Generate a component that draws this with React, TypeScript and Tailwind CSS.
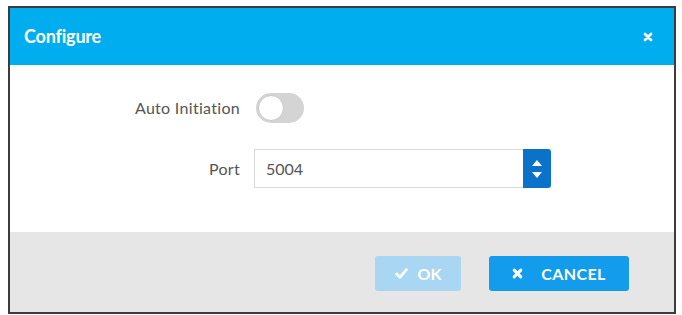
import React from 'react';

const font = { fontFamily: 'Lato, "Open Sans", sans-serif' };

function XIcon({ className }: { className?: string }) {
    return (
        <svg viewBox="0 0 10 10" className={className} fill="none" stroke="currentColor" strokeWidth={2.8} strokeLinecap="round">
            <path d="M2 2 L8 8 M8 2 L2 8" />
        </svg>
    );
}

function CheckIcon({ className }: { className?: string }) {
    return (
        <svg viewBox="0 0 12 10" className={className} fill="none" stroke="currentColor" strokeWidth={2.6} strokeLinecap="round" strokeLinejoin="round">
            <path d="M1.5 5.5 L4.5 8.5 L10.5 1.5" />
        </svg>
    );
}

export default function App() {
    return (
        <div className="w-[682px] h-[315px] bg-white pt-[6px] pl-[8px]" style={font}>
            <div className="w-[668px] h-[308px] border-2 border-[#3c3c3c] flex flex-col">
                {/* header */}
                <div className="h-[57px] bg-[#00aeef] flex items-center justify-between pl-[14px] pr-[21px]">
                    <span className="text-white text-[18px] font-bold tracking-[-0.2px]">Configure</span>
                    <XIcon className="w-[10px] h-[10px] text-white" />
                </div>

                {/* body */}
                <div className="h-[167px] bg-white pt-[28px] flex flex-col gap-[26px]">
                    <div className="flex items-center">
                        <span className="w-[230px] text-right text-[16px] tracking-[0.3px] text-[#555]">Auto Initiation</span>
                        <div className="ml-[16px] w-[48px] h-[30px] rounded-full bg-[#d4d4d4] flex items-center pl-[2px]">
                            <div className="w-[26px] h-[26px] rounded-full bg-white border border-[#c8c8c8]" />
                        </div>
                    </div>
                    <div className="flex items-center">
                        <span className="w-[230px] text-right text-[16px] tracking-[0.3px] text-[#555]">Port</span>
                        <div className="ml-[14px] flex h-[39px]">
                            <div className="w-[269px] border border-[#d9d9d9] border-r-0 flex items-center pl-[11px] text-[16px] text-[#555]">5004</div>
                            <div className="w-[28px] bg-[#0b72c9] rounded-r-[3px] flex flex-col items-center justify-center gap-[6px]">
                                <svg viewBox="0 0 10 6" className="w-[10px] h-[6px]"><path d="M5 0 L10 6 L0 6 Z" fill="white" /></svg>
                                <svg viewBox="0 0 10 6" className="w-[10px] h-[6px]"><path d="M0 0 L10 0 L5 6 Z" fill="white" /></svg>
                            </div>
                        </div>
                    </div>
                </div>

                {/* footer */}
                <div className="flex-1 bg-[#e6e6e6] flex justify-end items-start pt-[24px] pr-[45px] gap-[28px]">
                    <button className="w-[86px] h-[35px] rounded-[3px] bg-[#a9d6f2] text-white text-[16px] font-bold flex items-center justify-center gap-[10px]">
                        <CheckIcon className="w-[13px] h-[11px]" />
                        <span>OK</span>
                    </button>
                    <button className="w-[140px] h-[35px] rounded-[3px] bg-[#139ceb] text-white text-[16px] font-bold tracking-[0.4px] flex items-center justify-center gap-[18px]">
                        <XIcon className="w-[11px] h-[11px]" />
                        <span>CANCEL</span>
                    </button>
                </div>
            </div>
        </div>
    );
}
